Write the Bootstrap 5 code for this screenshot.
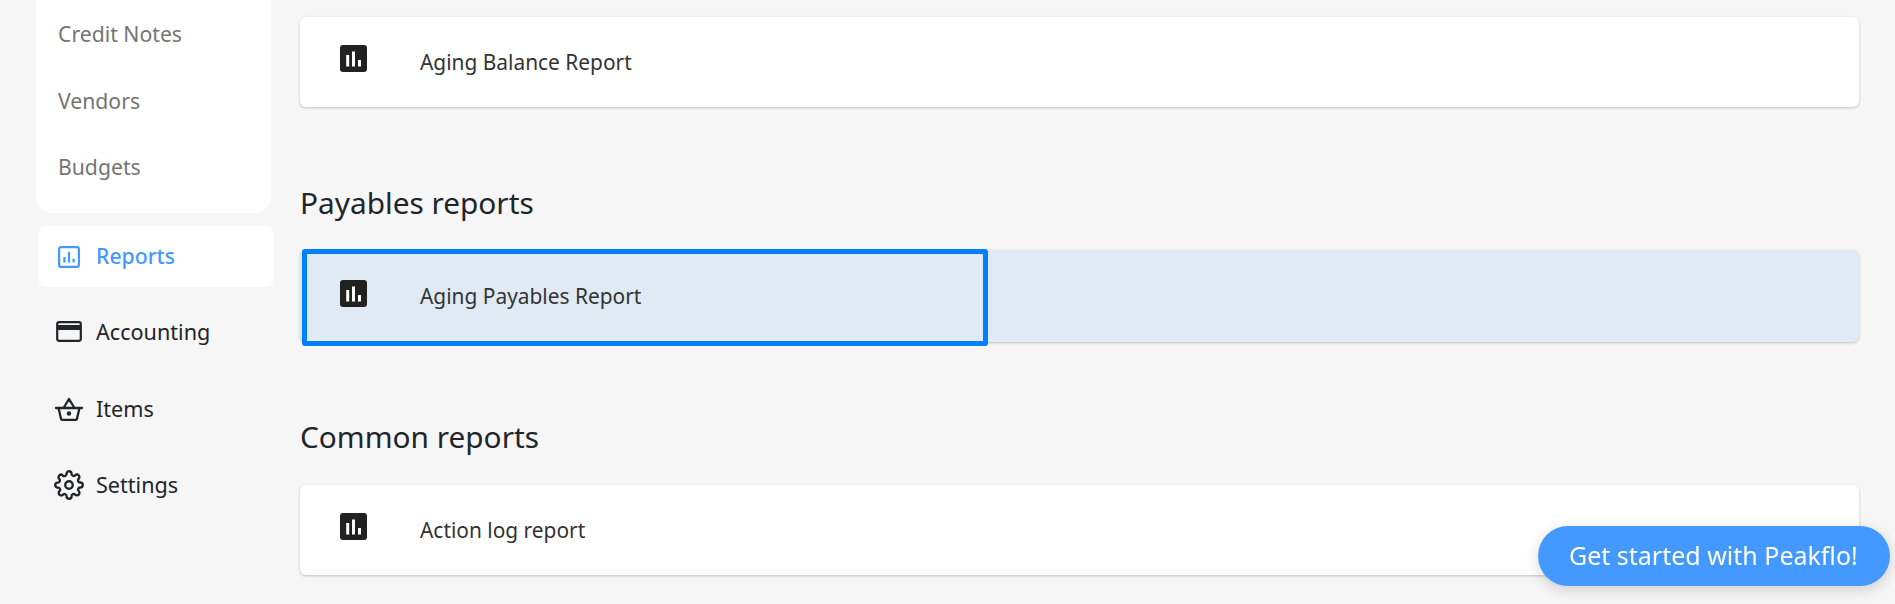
<!doctype html>
<html lang="en">
<head>
<meta charset="utf-8">
<title>Reports</title>
<link href="https://cdn.jsdelivr.net/npm/bootstrap@5.3.0/dist/css/bootstrap.min.css" rel="stylesheet">
<style>
html,body{height:604px;overflow:hidden}
body{background:#f6f6f6;font-family:"Noto Sans",sans-serif;color:#212529}
.app-shell{height:604px;overflow:hidden}
.side-col{width:300px;flex:none;padding-left:36px}
.side-panel{width:235px;height:213px;background:#fff;border-radius:0 0 16px 16px;padding-left:22px}
.side-sub{height:66.5px;font-size:21.2px;color:#757575;line-height:67px}
.side-main{width:234px;height:61px;margin-left:3px;margin-top:13px;border-radius:6px;background:#fff;color:#4399ff;font-size:21.2px;font-weight:500;padding-left:19px;gap:16px}
.side-main span{margin-top:-1px}
.side-plain{height:76.5px;margin-left:3px;width:234px;padding-left:15px;font-size:21.6px;gap:12px;color:#212529}
.side-plain svg{width:30px;height:30px;flex:none}
.side-main svg{width:22px;height:22px;flex:none}
.side-first{margin-top:7px}
.main-col{width:1559px;flex:none;padding-top:17px}
.rep-card{height:90px;background:#fff;border-radius:6px;box-shadow:0 1px 3px rgba(0,0,0,.22);font-size:20.9px;color:#333;position:relative}
.rep-active{background:#e0eaf4;height:92px}
.rep-inner{height:100%;padding-left:40px}
.rep-icon{width:27px;height:27px;flex:none;margin-top:-8px}
.rep-name{margin-left:53px;margin-top:1px}
.rep-focus{position:absolute;left:2px;top:-1px;width:686px;height:97px;border:5px solid #0080ff;border-radius:3px;padding-left:33px}
.rep-focus .rep-name{margin-top:-1px}
.rep-head{font-size:29.800px;font-weight:400;margin:0;line-height:36px;color:#212529}
.head-one{margin-top:78px;margin-bottom:29px}
.head-two{margin-top:77px;margin-bottom:30px}
.start-btn{position:fixed;left:1538px;top:526px;width:352px;height:60px;border-radius:30px;background:#4399ff;color:#fff;border:0;font-size:25px;font-family:"Noto Sans",sans-serif;padding:0 0 0 31px;text-align:left;box-shadow:0 4px 14px rgba(0,0,0,.16);white-space:nowrap}
</style>
</head>
<body>
<div class="app-shell d-flex">
  <aside class="side-col">
    <div class="side-panel">
      <div class="side-sub">Credit Notes</div>
      <div class="side-sub">Vendors</div>
      <div class="side-sub">Budgets</div>
    </div>
    <div class="side-main d-flex align-items-center">
      <svg viewBox="0 0 24 24" fill="none" aria-hidden="true"><rect x="1.2" y="1.2" width="21.6" height="21.6" rx="2" stroke="#4399ff" stroke-width="2.4"/><path d="M7 12v6M12 6.500v11.500M17 14v4" stroke="#4399ff" stroke-width="2.4"/></svg>
      <span>Reports</span>
    </div>
    <div class="side-plain side-first d-flex align-items-center">
      <svg viewBox="0 0 30 30" fill="none" aria-hidden="true"><rect x="3.200" y="5.200" width="23.600" height="18.600" rx="2" stroke="#212529" stroke-width="2.200"/><rect x="3" y="8" width="24" height="5" fill="#212529"/></svg>
      <span>Accounting</span>
    </div>
    <div class="side-plain d-flex align-items-center">
      <svg viewBox="0 0 30 30" fill="none" aria-hidden="true"><path d="M2 14h26M4.500 14l2.600 11a1 1 0 0 0 1 .8h13.800a1 1 0 0 0 1-.8l2.600-11M9.500 14 15 5l5.500 9" stroke="#212529" stroke-width="2.300" stroke-linejoin="round" stroke-linecap="round"/><circle cx="15" cy="19.500" r="2.200" fill="#212529"/></svg>
      <span>Items</span>
    </div>
    <div class="side-plain d-flex align-items-center">
      <svg viewBox="0 0 24 24" fill="none" aria-hidden="true"><circle cx="12" cy="12" r="3" stroke="#212529" stroke-width="1.900"/><path d="M19.400 15a1.650 1.650 0 0 0 .33 1.820l.06.06a2 2 0 1 1-2.830 2.830l-.06-.06a1.650 1.650 0 0 0-2.820 1.170V21a2 2 0 1 1-4 0v-.09A1.650 1.650 0 0 0 7.280 19.740l-.06.06a2 2 0 1 1-2.830-2.830l.06-.06A1.650 1.650 0 0 0 3.280 14.090H3a2 2 0 1 1 0-4h.09A1.650 1.650 0 0 0 4.260 7.270l-.06-.06A2 2 0 1 1 7.030 4.380l.06.06a1.650 1.650 0 0 0 1.820.33H9a1.650 1.650 0 0 0 1-1.510V3a2 2 0 1 1 4 0v.09a1.650 1.650 0 0 0 2.820 1.170l.06-.06a2 2 0 1 1 2.830 2.830l-.06.06a1.650 1.650 0 0 0-.33 1.820V9a1.650 1.650 0 0 0 1.510 1H21a2 2 0 1 1 0 4h-.09a1.650 1.650 0 0 0-1.510 1z" stroke="#212529" stroke-width="1.900" stroke-linejoin="round"/></svg>
      <span>Settings</span>
    </div>
  </aside>
  <main class="main-col">
    <div class="rep-card">
      <div class="rep-inner d-flex align-items-center">
        <svg class="rep-icon" viewBox="0 0 27 27" aria-hidden="true"><rect width="27" height="27" rx="3" fill="#212121"/><path d="M6.200 10h3v11.500h-3zM12 6.500h3v15h-3zM18 15h3v6.500h-3z" fill="#fff"/></svg>
        <span class="rep-name">Aging Balance Report</span>
      </div>
    </div>
    <h2 class="rep-head head-one">Payables reports</h2>
    <div class="rep-card rep-active">
      <div class="rep-focus d-flex align-items-center">
        <svg class="rep-icon" viewBox="0 0 27 27" aria-hidden="true"><rect width="27" height="27" rx="3" fill="#212121"/><path d="M6.200 10h3v11.500h-3zM12 6.500h3v15h-3zM18 15h3v6.500h-3z" fill="#fff"/></svg>
        <span class="rep-name">Aging Payables Report</span>
      </div>
    </div>
    <h2 class="rep-head head-two">Common reports</h2>
    <div class="rep-card">
      <div class="rep-inner d-flex align-items-center">
        <svg class="rep-icon" viewBox="0 0 27 27" aria-hidden="true"><rect width="27" height="27" rx="3" fill="#212121"/><path d="M6.200 10h3v11.500h-3zM12 6.500h3v15h-3zM18 15h3v6.500h-3z" fill="#fff"/></svg>
        <span class="rep-name">Action log report</span>
      </div>
    </div>
  </main>
</div>
<button class="start-btn" type="button">Get started with Peakflo!</button>
<script src="https://cdn.jsdelivr.net/npm/bootstrap@5.3.0/dist/js/bootstrap.bundle.min.js"></script>
</body>
</html>
